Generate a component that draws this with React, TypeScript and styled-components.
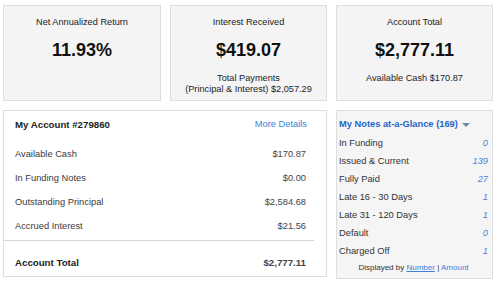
import React from 'react';
import styled, { createGlobalStyle } from 'styled-components';

const GlobalStyle = createGlobalStyle`
  html, body {
    margin: 0;
    padding: 0;
    background: #ffffff;
  }
  body {
    font-family: 'Liberation Sans', Arial, sans-serif;
    color: #333333;
  }
`;

const Page = styled.div`
  width: 500px;
  height: 282px;
  padding: 5px 0 0 3px;
  box-sizing: border-box;
  display: flex;
  flex-direction: column;
  gap: 9px;
`;

const TopRow = styled.div`
  display: grid;
  grid-template-columns: 158px 157px 157px;
  column-gap: 9px;
`;

const StatCard = styled.div`
  height: 96px;
  box-sizing: border-box;
  background: #f4f4f4;
  border: 1px solid #dddddd;
  padding-top: 10px;
  display: flex;
  flex-direction: column;
  align-items: center;
  text-align: center;
`;

const StatLabel = styled.div`
  font-size: 9.2px;
  line-height: 12px;
  color: #222222;
`;

const StatValue = styled.div`
  margin-top: 11px;
  font-size: 18px;
  line-height: 22px;
  font-weight: bold;
  color: #111111;
`;

const StatNote = styled.div`
  margin-top: 12px;
  font-size: 9.2px;
  line-height: 11px;
  color: #222222;
`;

const BottomRow = styled.div`
  display: grid;
  grid-template-columns: 324px 157px;
  column-gap: 9px;
  align-items: start;
`;

const AccountPanel = styled.div`
  height: 167px;
  box-sizing: border-box;
  background: #ffffff;
  border: 1px solid #dddddd;
  display: flex;
  flex-direction: column;
`;

const PanelHeader = styled.div`
  display: flex;
  justify-content: space-between;
  align-items: center;
  padding: 7px 19px 0 11px;
  height: 12px;
  margin-bottom: 12px;
`;

const PanelTitle = styled.div`
  font-size: 9.7px;
  font-weight: bold;
  color: #222222;
`;

const MoreLink = styled.a`
  font-size: 9.3px;
  color: #3d80d8;
  text-decoration: none;
`;

const AccountRow = styled.div<{ $total?: boolean }>`
  display: flex;
  justify-content: space-between;
  align-items: center;
  height: 24px;
  padding: 0 20px 0 11px;
  font-size: ${(p) => (p.$total ? '9.7px' : '9.3px')};
  font-weight: ${(p) => (p.$total ? 'bold' : 'normal')};
  color: ${(p) => (p.$total ? '#222222' : '#3a3a3a')};
`;

const AccountValue = styled.span`
  color: #444444;
  font-weight: inherit;
`;

const Divider = styled.div`
  margin: 2px 12px 0 0;
  border-top: 1px solid #d6d6d6;
`;

const TotalWrap = styled.div`
  padding-top: 9px;
`;

const NotesPanel = styled.div`
  height: 169px;
  box-sizing: border-box;
  background: #f5f5f5;
  border: 1px solid #dddddd;
  padding: 7px 4px 0 2px;
  display: flex;
  flex-direction: column;
`;

const NotesTitle = styled.div`
  display: flex;
  align-items: center;
  gap: 4px;
  height: 12px;
  margin-bottom: 4px;
  font-size: 9.3px;
  font-weight: bold;
  color: #1f66c9;
`;

const Caret = styled.span`
  width: 0;
  height: 0;
  border-left: 4px solid transparent;
  border-right: 4px solid transparent;
  border-top: 4px solid #7388a6;
  margin-top: 1px;
`;

const NoteRow = styled.div`
  display: flex;
  justify-content: space-between;
  align-items: center;
  height: 18px;
  font-size: 9.3px;
  color: #333333;
`;

const NoteCount = styled.span`
  font-style: italic;
  color: #4a86d4;
`;

const DisplayedBy = styled.div`
  margin-top: 3px;
  text-align: center;
  font-size: 8px;
  line-height: 10px;
  color: #333333;
`;

const SmallLink = styled.a<{ $underline?: boolean }>`
  color: #3d80d8;
  text-decoration: ${(p) => (p.$underline ? 'underline' : 'none')};
`;

const accountRows = [
  ['Available Cash', '$170.87'],
  ['In Funding Notes', '$0.00'],
  ['Outstanding Principal', '$2,584.68'],
  ['Accrued Interest', '$21.56'],
];

const noteRows = [
  ['In Funding', '0'],
  ['Issued & Current', '139'],
  ['Fully Paid', '27'],
  ['Late 16 - 30 Days', '1'],
  ['Late 31 - 120 Days', '1'],
  ['Default', '0'],
  ['Charged Off', '1'],
];

const App = () => {
  return (
    <>
      <GlobalStyle />
      <Page>
        <TopRow>
          <StatCard>
            <StatLabel>Net Annualized Return</StatLabel>
            <StatValue>11.93%</StatValue>
          </StatCard>
          <StatCard>
            <StatLabel>Interest Received</StatLabel>
            <StatValue>$419.07</StatValue>
            <StatNote>
              Total Payments
              <br />
              (Principal &amp; Interest) $2,057.29
            </StatNote>
          </StatCard>
          <StatCard>
            <StatLabel>Account Total</StatLabel>
            <StatValue>$2,777.11</StatValue>
            <StatNote>Available Cash $170.87</StatNote>
          </StatCard>
        </TopRow>
        <BottomRow>
          <AccountPanel>
            <PanelHeader>
              <PanelTitle>My Account #279860</PanelTitle>
              <MoreLink href="#">More Details</MoreLink>
            </PanelHeader>
            {accountRows.map(([label, value]) => (
              <AccountRow key={label}>
                <span>{label}</span>
                <AccountValue>{value}</AccountValue>
              </AccountRow>
            ))}
            <Divider />
            <TotalWrap>
              <AccountRow $total>
                <span>Account Total</span>
                <AccountValue>$2,777.11</AccountValue>
              </AccountRow>
            </TotalWrap>
          </AccountPanel>
          <NotesPanel>
            <NotesTitle>
              My Notes at-a-Glance (169)
              <Caret />
            </NotesTitle>
            {noteRows.map(([label, count]) => (
              <NoteRow key={label}>
                <span>{label}</span>
                <NoteCount>{count}</NoteCount>
              </NoteRow>
            ))}
            <DisplayedBy>
              Displayed by <SmallLink href="#" $underline>Number</SmallLink> |{' '}
              <SmallLink href="#">Amount</SmallLink>
            </DisplayedBy>
          </NotesPanel>
        </BottomRow>
      </Page>
    </>
  );
};

export default App;
